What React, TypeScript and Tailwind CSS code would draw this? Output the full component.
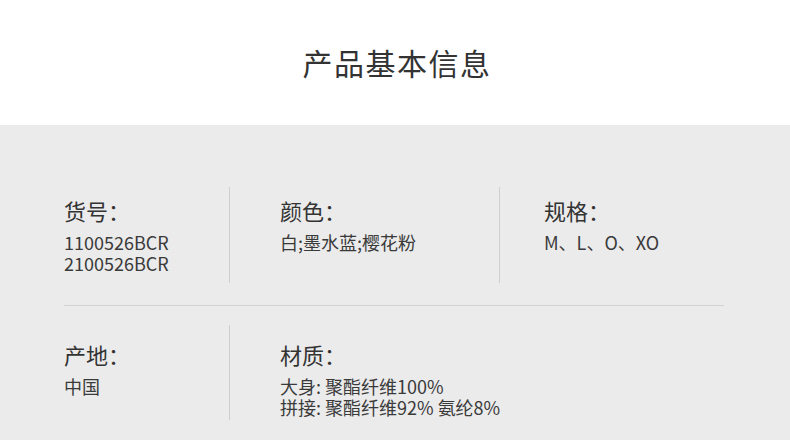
import React from "react";

const font = { fontFamily: '"Noto Sans CJK SC", "Noto Sans", sans-serif' };

function Cell({
  label,
  lines,
  className,
  pt,
}: {
  label: string;
  lines: string[];
  className: string;
  pt: string;
}) {
  return (
    <div className={className}>
      <div className={pt}>
        <div className="text-[22px] leading-[30px] text-[#333]">{label}</div>
        <div className="mt-[7px] text-[18px] leading-[21px] text-[#3a3a3a] whitespace-nowrap">
          {lines.map((l, i) => (
            <div key={i}>{l}</div>
          ))}
        </div>
      </div>
    </div>
  );
}

export default function App() {
  return (
    <div className="w-[790px] h-[440px] overflow-hidden bg-white" style={font}>
      <div className="h-[125px] flex items-center justify-center">
        <div className="text-[30px] leading-[45px] tracking-[1.5px] text-[#333] pl-[4px]">产品基本信息</div>
      </div>
      <div className="h-[315px] bg-[#ebebeb] px-[64px] pt-[62px]">
        <div className="flex h-[96px]">
          <Cell
            className="w-[166px] border-r border-[#cfcfcf]"
            pt="pt-[8px]"
            label="货号："
            lines={["1100526BCR", "2100526BCR"]}
          />
          <Cell
            className="w-[270px] border-r border-[#cfcfcf] pl-[50px]"
            pt="pt-[8px]"
            label="颜色："
            lines={["白;墨水蓝;樱花粉"]}
          />
          <Cell className="pl-[44px]" pt="pt-[8px]" label="规格：" lines={["M、L、O、XO"]} />
        </div>
        <div className="mt-[22px] w-[660px] border-t border-[#d2d2d2]" />
        <div className="flex h-[95px] mt-[19px]">
          <Cell
            className="w-[166px] border-r border-[#cfcfcf]"
            pt="pt-[14px]"
            label="产地："
            lines={["中国"]}
          />
          <Cell
            className="w-[270px] pl-[50px]"
            pt="pt-[14px]"
            label="材质："
            lines={["大身: 聚酯纤维100%", "拼接: 聚酯纤维92% 氨纶8%"]}
          />
        </div>
      </div>
    </div>
  );
}
